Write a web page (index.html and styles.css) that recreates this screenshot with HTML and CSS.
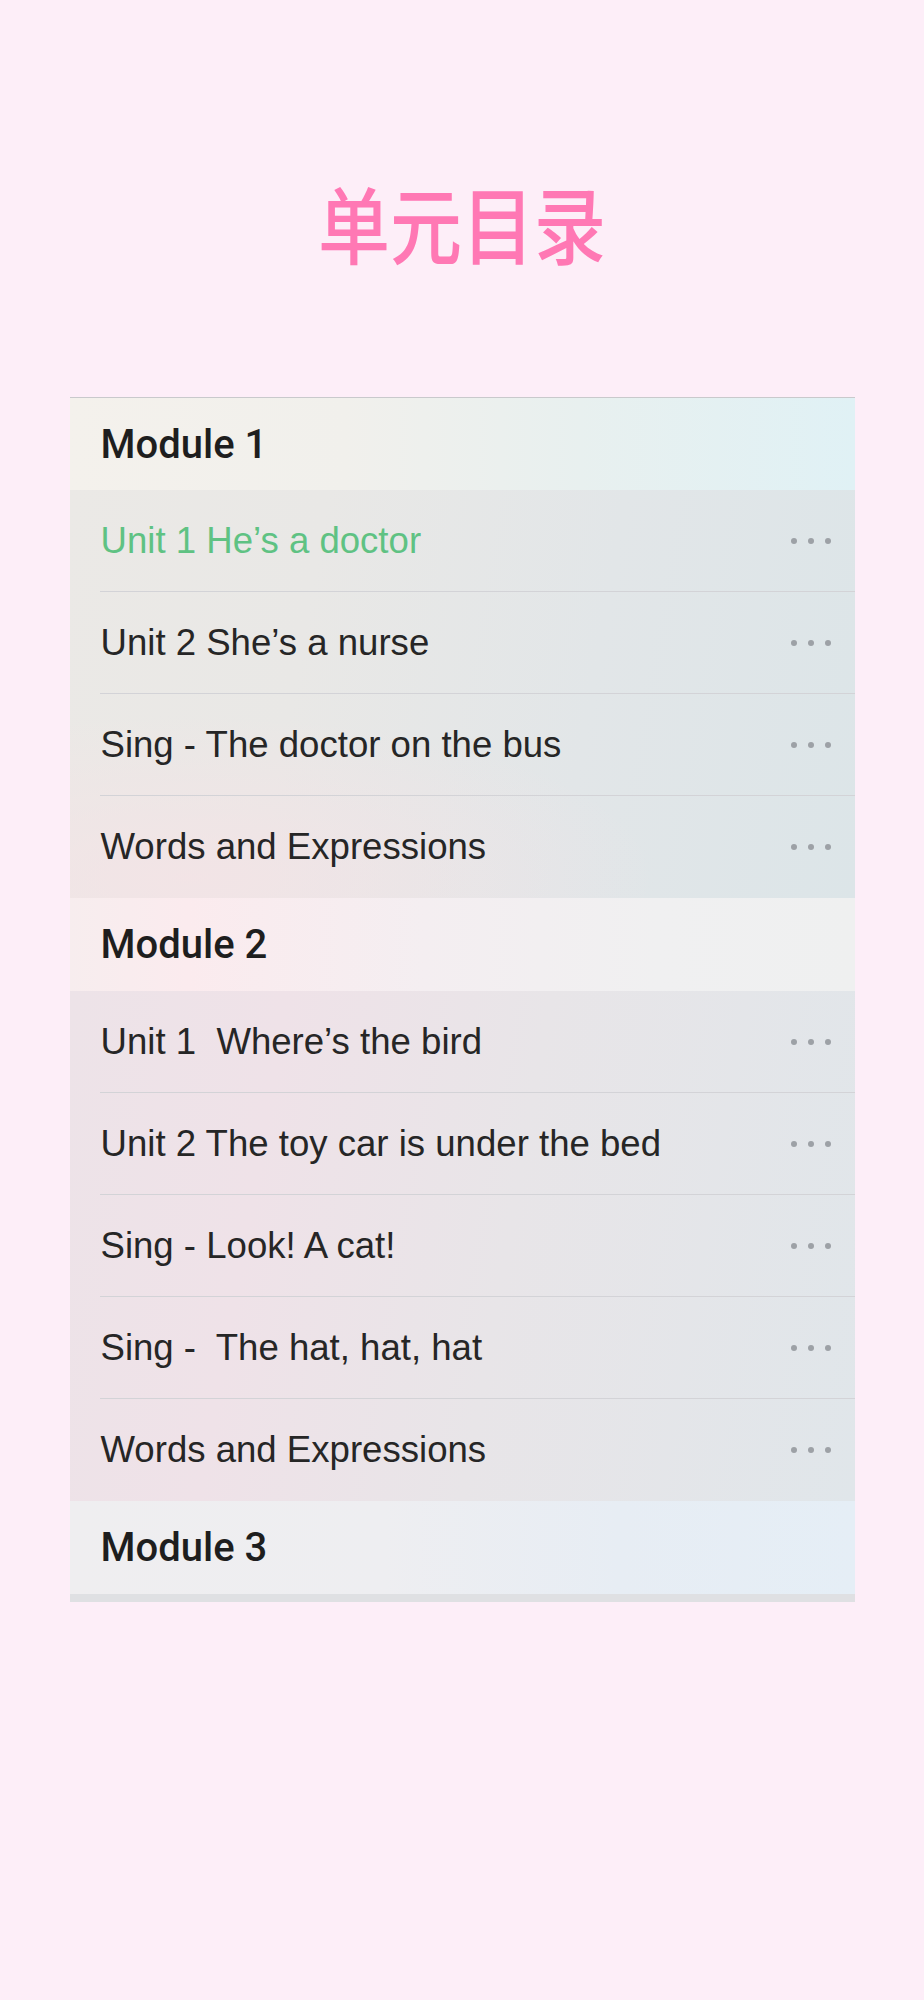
FILE: index.html
```html
<!DOCTYPE html>
<html lang="zh-CN">

<head>
    <meta charset="UTF-8">
    <meta name="viewport" content="width=device-width, initial-scale=1.0">
    <title>单元目录</title>
    <link rel="stylesheet" href="styles.css">
</head>

<body>
    <h1 class="title">单元目录</h1>

    <div class="catalog">
        <!-- Module 1 -->
        <div class="module-head head-1">Module 1</div>
        <ul class="units units-1">
            <li class="unit active">
                <div class="unit-body"><span class="unit-name">Unit 1 He’s a doctor</span><span class="more"><i></i><i></i><i></i></span></div>
            </li>
            <li class="unit">
                <div class="unit-body"><span class="unit-name">Unit 2 She’s a nurse</span><span class="more"><i></i><i></i><i></i></span></div>
            </li>
            <li class="unit">
                <div class="unit-body"><span class="unit-name">Sing - The doctor on the bus</span><span class="more"><i></i><i></i><i></i></span></div>
            </li>
            <li class="unit">
                <div class="unit-body"><span class="unit-name">Words and Expressions</span><span class="more"><i></i><i></i><i></i></span></div>
            </li>
        </ul>

        <!-- Module 2 -->
        <div class="module-head head-2">Module 2</div>
        <ul class="units units-2">
            <li class="unit">
                <div class="unit-body"><span class="unit-name">Unit 1  Where’s the bird</span><span class="more"><i></i><i></i><i></i></span></div>
            </li>
            <li class="unit">
                <div class="unit-body"><span class="unit-name">Unit 2 The toy car is under the bed</span><span class="more"><i></i><i></i><i></i></span></div>
            </li>
            <li class="unit">
                <div class="unit-body"><span class="unit-name">Sing - Look! A cat!</span><span class="more"><i></i><i></i><i></i></span></div>
            </li>
            <li class="unit">
                <div class="unit-body"><span class="unit-name">Sing -  The hat, hat, hat</span><span class="more"><i></i><i></i><i></i></span></div>
            </li>
            <li class="unit">
                <div class="unit-body"><span class="unit-name">Words and Expressions</span><span class="more"><i></i><i></i><i></i></span></div>
            </li>
        </ul>

        <!-- Module 3 -->
        <div class="module-head head-3">Module 3</div>
        <div class="peek"></div>
    </div>
</body>

</html>
```

FILE: styles.css
```css
/* 通用样式 */
body {
    margin: 0;
    font-family: "Liberation Sans", Arial, sans-serif;
    background-color: #fdeef8;
}

.title {
    margin: 0;
    padding-top: 186px;
    height: 72px;
    line-height: 72px;
    text-align: center;
    font-family: "Noto Sans CJK SC", sans-serif;
    font-size: 72px;
    font-weight: 500;
    color: #ff78b4;
    transform: scaleY(1.16);
    transform-origin: 50% 222px;
}

/* 目录列表 */
.catalog {
    width: 785px;
    margin: 139px auto 0;
}

.module-head {
    box-sizing: border-box;
    height: 93px;
    padding-left: 31px;
    display: flex;
    align-items: center;
    font-family: Roboto, "Liberation Sans", sans-serif;
    font-size: 40px;
    font-weight: 500;
    color: #1e1e1e;
}

.head-1 {
    border-top: 1px solid #c9c9cc;
    background: linear-gradient(90deg, #f4f1ec 0%, #f1f0ec 35%, #e8f0ef 65%, #e0f1f5 100%);
}

.head-2 {
    background: linear-gradient(90deg, #f7edee 0%, #fbebee 15%, #f4eef1 45%, #f0f0f1 75%, #eff0f0 100%);
}

.head-3 {
    background: linear-gradient(90deg, #efeef0 0%, #eeeef1 40%, #e7edf4 70%, #e5eef6 100%);
}

.units {
    list-style: none;
    margin: 0;
    padding: 0;
}

.units-1 {
    background:
        radial-gradient(ellipse 60% 40% at 15% 95%, rgba(246, 226, 230, 0.7), rgba(246, 226, 230, 0)),
        linear-gradient(100deg, #ebe9e6 0%, #e9e8e6 30%, #e2e6e8 65%, #dce5e8 100%);
}

.units-2 {
    background: linear-gradient(100deg, #ede3e8 0%, #efe2e8 25%, #e8e5e8 55%, #e0e6ea 100%);
}

.unit {
    padding-left: 30px;
}

.unit-body {
    box-sizing: border-box;
    height: 102px;
    display: flex;
    align-items: center;
    justify-content: space-between;
    padding: 0 24px 0 1px;
    border-bottom: 1px solid #d3d3d7;
}

.unit:last-child .unit-body {
    border-bottom-color: transparent;
}

.unit-name {
    font-size: 36.6px;
    color: #262626;
    white-space: pre;
}

.active .unit-name {
    color: #5fc283;
}

.more {
    display: flex;
    gap: 11px;
}

.more i {
    width: 6px;
    height: 6px;
    border-radius: 50%;
    background-color: #9da1a6;
}

.peek {
    height: 8px;
    background-color: #dfe0e3;
}
```
